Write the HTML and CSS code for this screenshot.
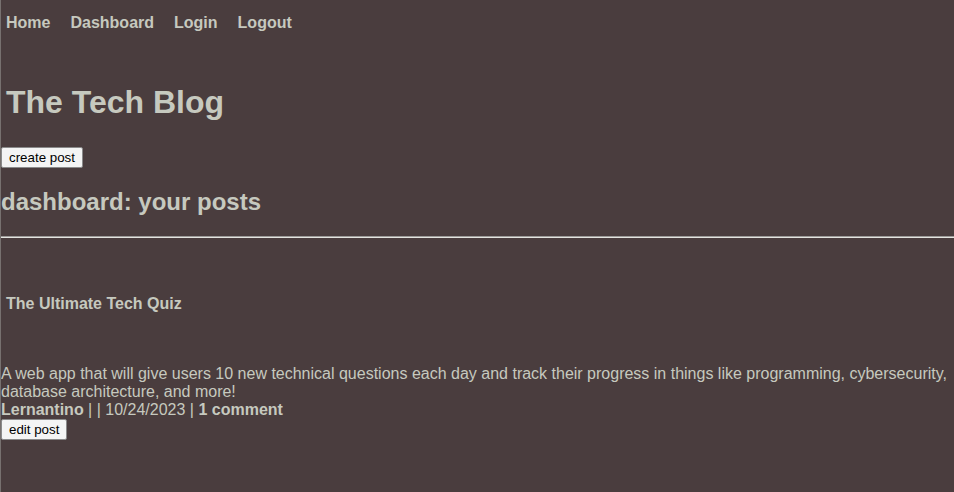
FILE: index.html
```html
<!DOCTYPE html>
<html lang="en">
<head>
<meta charset="utf-8">
<title>The Tech Blog</title>
<link rel="stylesheet" href="styles.css">
</head>
<body>
<nav class="nav">
  <a class="nav-link" href="#">Home</a>
  <a class="nav-link" href="#">Dashboard</a>
  <a class="nav-link" href="#">Login</a>
  <a class="nav-link" href="#">Logout</a>
</nav>
<header class="site-header">
  <h1 class="site-title">The Tech Blog</h1>
</header>
<main class="dashboard">
  <button class="btn" type="button">create post</button>
  <h2 class="dash-title">dashboard: your posts</h2>
  <hr class="divider">
  <article class="post">
    <h4 class="post-title">The Ultimate Tech Quiz</h4>
    <p class="post-body">A web app that will give users 10 new technical questions each day and track their progress in things like programming, cybersecurity, database architecture, and more!</p>
    <div class="post-meta"><strong>Lernantino</strong> | | 10/24/2023 | <strong>1 comment</strong></div>
    <button class="btn" type="button">edit post</button>
  </article>
</main>
</body>
</html>
```
FILE: styles.css
```css
html {
  background: #4a3d3e;
}
body {
  margin: 0;
  min-height: 492px;
  border-left: 1px solid #77716f;
  background: #4a3d3e;
  color: #c6c9bf;
  font-family: "Liberation Sans", Arial, sans-serif;
  font-size: 16px;
}
.nav {
  display: flex;
  gap: 20px;
  padding: 14px 5px 0;
}
.nav-link {
  color: #c6c9bf;
  font-weight: bold;
  text-decoration: none;
}
.site-title {
  font-size: 32px;
  margin: 52px 0 26px;
  padding-left: 5px;
}
.btn {
  display: block;
  font-family: "Liberation Sans", Arial, sans-serif;
  font-size: 13.333px;
  line-height: 17px;
  padding: 1px 7px;
  border: 1px solid #8a8a8a;
  border-radius: 2px;
  background: #f4f4f4;
  color: #000;
}
.dash-title {
  font-size: 24px;
  margin: 20px 0;
}
.divider {
  margin: 0;
  border: 0;
  border-top: 1px solid #9c9a98;
  border-bottom: 1px solid #e4e4e0;
  height: 0;
}
.post-title {
  font-size: 16px;
  margin: 57px 0 0;
  padding-left: 5px;
}
.post-body {
  margin: 52px 0 0;
}
.post-meta {
  margin: 0;
}
```
